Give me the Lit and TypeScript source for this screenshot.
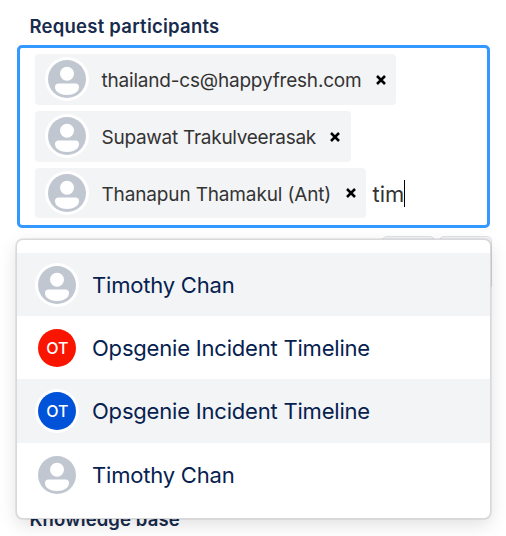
import { LitElement, html, css, svg } from "lit";
import { customElement, property } from "lit/decorators.js";

@customElement("user-avatar")
class UserAvatar extends LitElement {
  @property() initials = "";
  @property() tone = "";

  static styles = css`
    :host { display: block; flex: none; width: 44px; height: 44px; }
    svg { display: block; }
    .ring { fill: #fff; }
    .person { fill: #c1c7d0; }
    .red { fill: #f91500; }
    .blue { fill: #0052d9; }
    .figure { fill: #fff; }
    text { fill: #fff; font: 500 16px Inter, "Liberation Sans", sans-serif; text-anchor: middle; }
  `;

  render() {
    return html`<svg width="44" height="44" viewBox="0 0 44 44">
      <circle class="ring" cx="22" cy="22" r="22" />
      <circle class=${this.tone || "person"} cx="22" cy="22" r="19" />
      ${this.initials
        ? svg`<text x="22.3" y="27.5">${this.initials}</text>`
        : svg`<circle class="figure" cx="22" cy="16.8" r="7" />
            <path class="figure" d="M13.5 26.6H30.5Q34 26.6 34 30.1C34 35.2 28.6 38 22 38S10 35.2 10 30.1Q10 26.6 13.5 26.6Z" />`}
    </svg>`;
  }
}

@customElement("app-root")
class AppRoot extends LitElement {
  static styles = css`
    :host {
      display: block; position: relative; box-sizing: border-box;
      width: 506px; height: 536px; padding: 14px 16px 0 17px; overflow: hidden;
      background: #fff; color: #172b4d;
      font-family: Inter, "Liberation Sans", sans-serif;
    }
    h2 { margin: 0 0 0 12.5px; font-size: 18.5px; line-height: 24px; font-weight: 600; white-space: nowrap; }
    .participants { letter-spacing: 0.24px; }
    .field {
      box-sizing: border-box; margin-top: 7px; height: 183px; width: 473px;
      padding: 6px 15px; border: 3px solid #3398ff; border-radius: 5px;
      display: flex; flex-direction: column; gap: 6px;
    }
    .line { display: flex; align-items: center; }
    .chip {
      box-sizing: border-box; height: 51px; padding: 0 10.5px 0 10px;
      display: flex; align-items: center; border-radius: 4px;
      background: #f3f4f6; color: #333; font-size: 19px; white-space: nowrap;
    }
    .chip:has(.c0) { width: 361px; }
    .chip:has(.c1) { width: 316px; padding-right: 11.5px; }
    .chip:has(.c2) { width: 331px; height: 50px; }
    .chip user-avatar { margin-top: -1px; }
    .label { margin-left: 12.5px; line-height: 26px; padding-top: 2px; letter-spacing: -0.2px; }
    .c1 { letter-spacing: -0.27px; }
    .c2 { padding-top: 3px; letter-spacing: -0.15px; }
    .close { margin-left: auto; flex: none; }
    .typed { margin-left: 6.5px; padding-top: 2px; font-size: 22px; line-height: 27px; letter-spacing: -0.05px; color: #333; }
    .caret { width: 1px; height: 27px; background: #000; }
    .actions { display: flex; justify-content: flex-end; gap: 4px; margin-top: 8px; margin-right: -2px; }
    .action { box-sizing: border-box; width: 53px; height: 54px; background: #f3f4f6; border: 1px solid #dfe1e6; border-radius: 5px; }
    .knowledge { margin-top: 217px; letter-spacing: 0.1px; }
    .menu {
      position: absolute; left: 16px; top: 239px; box-sizing: border-box;
      width: 475px; height: 280px; padding: 13px 0; border: 1px solid #d9d9db;
      border-radius: 7px; background: #fff;
      box-shadow: 0 0 0 1px rgba(0, 0, 0, .06), 0 0 1px rgba(0, 0, 0, .12), 0 6px 18px rgba(0, 0, 0, .12);
    }
    .option {
      box-sizing: border-box; height: 63px; padding-left: 18px;
      display: flex; align-items: center; color: #06214f; font-size: 22px; white-space: nowrap;
    }
    .option:nth-child(odd) { background: #f3f4f6; }
    .option:nth-child(n + 3) { height: 64px; }
    .name { margin-left: 13px; line-height: 28px; letter-spacing: -0.2px; }
  `;

  private people = ["thailand-cs@happyfresh.com", "Supawat Trakulveerasak", "Thanapun Thamakul (Ant)"];
  private options = [
    { name: "Timothy Chan", initials: "", tone: "" },
    { name: "Opsgenie Incident Timeline", initials: "OT", tone: "red" },
    { name: "Opsgenie Incident Timeline", initials: "OT", tone: "blue" },
    { name: "Timothy Chan", initials: "", tone: "" },
  ];

  render() {
    return html`
      <h2 class="participants">Request participants</h2>
      <div class="field">
        ${this.people.map((p, i) => html`<div class="line">
          <div class="chip">
            <user-avatar></user-avatar>
            <span class="label c${i}">${p}</span>
            <svg class="close" width="10" height="10" viewBox="0 0 10 10"><path d="M1 1L9 9M9 1L1 9" stroke="#000" stroke-width="2.5" /></svg>
          </div>
          ${i === 2 ? html`<span class="typed">tim</span><span class="caret"></span>` : ""}
        </div>`)}
      </div>
      <div class="actions"><div class="action"></div><div class="action"></div></div>
      <h2 class="knowledge">Knowledge base</h2>
      <div class="menu">
        ${this.options.map((o) => html`<div class="option">
          <user-avatar .initials=${o.initials} .tone=${o.tone}></user-avatar>
          <span class="name">${o.name}</span>
        </div>`)}
      </div>
    `;
  }
}
